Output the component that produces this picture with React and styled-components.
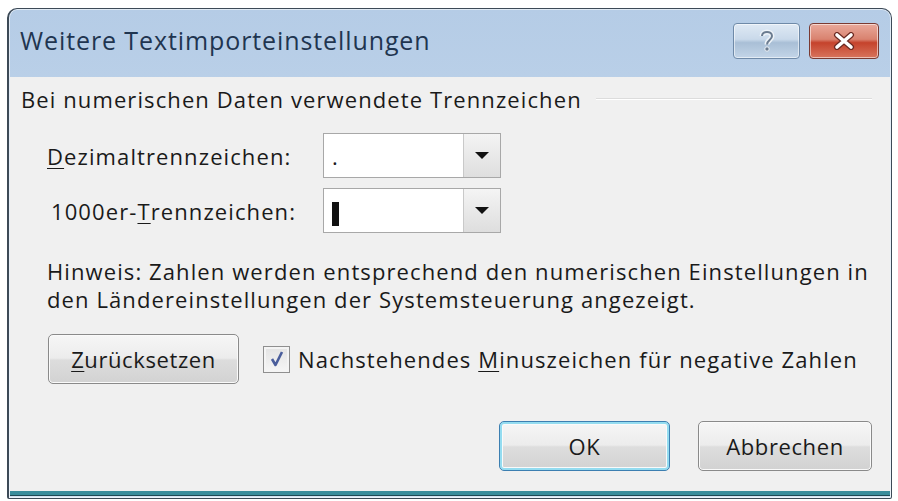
import React from "react";
import styled, { createGlobalStyle } from "styled-components";

const GlobalStyle = createGlobalStyle`
  html, body {
    margin: 0;
    padding: 0;
    background: #ffffff;
  }
  body {
    font-family: "Open Sans", "Noto Sans", sans-serif;
    color: #1a1a1a;
  }
`;

const Page = styled.div`
  width: 898px;
  height: 501px;
  padding: 8px 6px 4px 7px;
  box-sizing: border-box;
`;

const Window = styled.div`
  height: 100%;
  display: flex;
  flex-direction: column;
  border: 1px solid #3d4a57;
  border-left-width: 2px;
  border-radius: 10px 10px 2px 2px;
  background: linear-gradient(#b5cce6, #d3e3f2);
  box-shadow: inset 0 0 0 1px rgba(255, 255, 255, 0.6);
  overflow: hidden;
`;

const TitleBar = styled.div`
  height: 68px;
  display: flex;
  align-items: center;
  padding: 0 12px 0 11px;
  box-sizing: border-box;
`;

const Title = styled.div`
  flex: 1;
  font-size: 25px;
  color: #1f3550;
  letter-spacing: 0.9px;
  padding-bottom: 6px;
`;

const CaptionButton = styled.div`
  width: ${(p) => p.w}px;
  height: 36px;
  margin-left: ${(p) => p.gap || 0}px;
  border: 1px solid ${(p) => (p.danger ? "#7a3a32" : "#6f8aa8")};
  border-radius: 4px;
  box-sizing: border-box;
  display: flex;
  align-items: center;
  justify-content: center;
  margin-bottom: 4px;
  background: ${(p) =>
    p.danger
      ? "linear-gradient(#e9a99b 0%, #d9826f 45%, #c5432c 55%, #d8745d 100%)"
      : "linear-gradient(#dfe9f4 0%, #c9d9ea 45%, #a9bfd6 55%, #c3d5e8 100%)"};
  box-shadow: inset 0 0 0 1px rgba(255, 255, 255, 0.55);
`;

const Body = styled.div`
  flex: 1;
  margin: 0 1px 3px 1px;
  background: #f0f0f0;
  border-bottom: 4px solid #3a8d9c;
  box-shadow: 0 1px 0 #1f4a55;
  padding: 7px 18px 0 11px;
  font-size: 22px;
  letter-spacing: 1.1px;
  display: flex;
  flex-direction: column;
`;

const GroupHeader = styled.div`
  display: flex;
  align-items: center;
  gap: 14px;
  &::after {
    content: "";
    flex: 1;
    height: 1px;
    background: #dcdcdc;
    border-bottom: 1px solid #ffffff;
  }
`;

const Fields = styled.div`
  display: grid;
  grid-template-columns: 276px 178px;
  row-gap: 10px;
  margin: 19px 0 0 26px;
  align-items: center;
`;

const Label = styled.label`
  padding-left: ${(p) => p.indent || 0}px;
  u {
    text-decoration-thickness: 1px;
    text-underline-offset: 3px;
  }
`;

const Combo = styled.div`
  height: 45px;
  display: flex;
  border: 1px solid #a8a8a8;
  background: #ffffff;
  box-sizing: border-box;
`;

const ComboValue = styled.div`
  flex: 1;
  display: flex;
  align-items: center;
  padding-left: 8px;
  font-size: 22px;
`;

const Caret = styled.span`
  width: 7px;
  height: 24px;
  background: #111;
  margin-top: 6px;
`;

const ComboArrow = styled.div`
  width: 36px;
  display: flex;
  align-items: center;
  justify-content: center;
  border-left: 1px solid #c9c9c9;
  background: linear-gradient(#f4f4f4, #dedede);
  &::before {
    content: "";
    border-left: 7px solid transparent;
    border-right: 7px solid transparent;
    border-top: 7px solid #111;
  }
`;

const Note = styled.p`
  margin: 24px 0 0 26px;
  line-height: 28px;
`;

const ResetRow = styled.div`
  display: flex;
  align-items: center;
  gap: 24px;
  margin: 21px 0 0 27px;
`;

const Button = styled.button`
  font: inherit;
  letter-spacing: 0.6px;
  color: #1a1a1a;
  width: ${(p) => p.w}px;
  height: 50px;
  border-radius: 5px;
  border: 1px solid ${(p) => (p.primary ? "#3c7fb1" : "#8a8a8a")};
  background: linear-gradient(#f6f6f6 0%, #ececec 48%, #dddddd 52%, #d2d2d2 100%);
  box-shadow: ${(p) =>
    p.primary
      ? "inset 0 0 0 2px #94dcf0, inset 0 0 0 3px #fafafa"
      : "inset 0 0 0 1px #fafafa"};
  padding: 0;
  u {
    text-decoration-thickness: 1px;
    text-underline-offset: 3px;
  }
`;

const Check = styled.label`
  display: flex;
  align-items: center;
  gap: 8px;
  u {
    text-decoration-thickness: 1px;
    text-underline-offset: 3px;
  }
`;

const Box = styled.span`
  width: 27px;
  height: 27px;
  box-sizing: border-box;
  border: 1px solid #8f8f8f;
  background: linear-gradient(#e3e3e3, #f6f6f6);
  box-shadow: inset 0 0 0 2px #f4f4f4;
  display: flex;
  align-items: center;
  justify-content: center;
`;

const Actions = styled.div`
  display: flex;
  justify-content: flex-end;
  gap: 28px;
  margin: 37px 0 0 0;
`;

export default function App() {
  return (
    <Page>
      <GlobalStyle />
      <Window>
        <TitleBar>
          <Title>Weitere Textimporteinstellungen</Title>
          <CaptionButton w={67}>
            <svg width="16" height="24" viewBox="0 0 16 24">
              <path
                d="M3 7 C3 1.5, 13 1.5, 13 7 C13 11, 8 11, 8 15.5"
                fill="none"
                stroke="#eef3f8"
                strokeWidth="5"
              />
              <path
                d="M3 7 C3 1.5, 13 1.5, 13 7 C13 11, 8 11, 8 15.5"
                fill="none"
                stroke="#6b7c90"
                strokeWidth="2"
              />
              <circle cx="8" cy="20" r="2.2" fill="#6b7c90" stroke="#eef3f8" />
            </svg>
          </CaptionButton>
          <CaptionButton w={70} gap={9} danger>
            <svg width="22" height="18" viewBox="0 0 22 18">
              <path
                d="M4 3 L18 15 M18 3 L4 15"
                stroke="#6b2a22"
                strokeWidth="6"
                strokeLinecap="round"
              />
              <path
                d="M4 3 L18 15 M18 3 L4 15"
                stroke="#ffffff"
                strokeWidth="3.6"
                strokeLinecap="round"
              />
            </svg>
          </CaptionButton>
        </TitleBar>
        <Body>
          <GroupHeader>Bei numerischen Daten verwendete Trennzeichen</GroupHeader>
          <Fields>
            <Label>
              <u>D</u>ezimaltrennzeichen:
            </Label>
            <Combo>
              <ComboValue>.</ComboValue>
              <ComboArrow />
            </Combo>
            <Label indent={4}>
              1000er-<u>T</u>rennzeichen:
            </Label>
            <Combo>
              <ComboValue>
                <Caret />
              </ComboValue>
              <ComboArrow />
            </Combo>
          </Fields>
          <Note>
            Hinweis: Zahlen werden entsprechend den numerischen Einstellungen in
            <br />
            den Ländereinstellungen der Systemsteuerung angezeigt.
          </Note>
          <ResetRow>
            <Button w={191}>
              <u>Z</u>urücksetzen
            </Button>
            <Check>
              <Box>
                <svg width="16" height="18" viewBox="0 0 16 18">
                  <path
                    d="M3 9 L6.5 15 L13 2"
                    fill="none"
                    stroke="#4a5e9c"
                    strokeWidth="2.6"
                    strokeLinejoin="round"
                  />
                </svg>
              </Box>
              <span>
                Nachstehendes <u>M</u>inuszeichen für negative Zahlen
              </span>
            </Check>
          </ResetRow>
          <Actions>
            <Button w={171} primary>
              OK
            </Button>
            <Button w={174}>Abbrechen</Button>
          </Actions>
        </Body>
      </Window>
    </Page>
  );
}
